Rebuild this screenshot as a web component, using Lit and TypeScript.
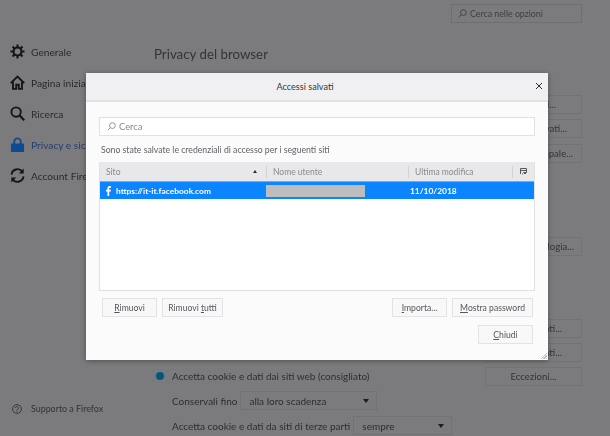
import { LitElement, html, css, svg } from "lit";
import { customElement } from "lit/decorators.js";

const navIcons = {
  gear: svg`<g fill="none" stroke="currentColor"><circle cx="8" cy="8" r="4.2" stroke-width="2.2"/><path stroke-width="2.2" d="M8 0.5v3M8 12.5v3M0.5 8h3M12.5 8h3M2.7 2.7l2.1 2.1M11.2 11.2l2.1 2.1M13.3 2.7l-2.1 2.1M4.8 11.2l-2.1 2.1"/></g>`,
  home: svg`<g fill="none" stroke="currentColor" stroke-width="2"><path d="M0.8 8.6L8 1.6l7.2 7"/><path d="M3.2 7v7.8h3.4v-4.4h2.8v4.4h3.4V7"/></g>`,
  search: svg`<g fill="none" stroke="currentColor" stroke-width="2"><circle cx="6.5" cy="6.5" r="5"/><path stroke-width="2.4" d="M10.2 10.2l5 5"/></g>`,
  lock: svg`<path fill="currentColor" d="M2 7h1.5V5a4.5 4.5 0 0 1 9 0v2H14a1 1 0 0 1 1 1v7a1 1 0 0 1-1 1H2a1 1 0 0 1-1-1V8a1 1 0 0 1 1-1zm3.5 0h5V5a2.5 2.5 0 0 0-5 0z"/>`,
  sync: svg`<g fill="none" stroke="currentColor" stroke-width="2"><path d="M1.6 7A6.5 6.5 0 0 1 13 3.6"/><path d="M14.4 9A6.5 6.5 0 0 1 3 12.4"/></g><path fill="currentColor" d="M14.6 0.6v5.2H9.4zM1.4 15.4v-5.2h5.2z"/>`,
};

const nav = [
  { icon: navIcons.gear, label: "Generale" },
  { icon: navIcons.home, label: "Pagina iniziale" },
  { icon: navIcons.search, label: "Ricerca" },
  { icon: navIcons.lock, label: "Privacy e sicurezza", active: true },
  { icon: navIcons.sync, label: "Account Firefox" },
];

// buttons of the page behind the dialog: gap above, text end from the right edge
const behind = [
  { label: "Eccezioni...", top: 30, pad: 25 },
  { label: "Accessi salvati...", top: 5, pad: 14 },
  { label: "Cambia password principale...", top: 6, pad: 8 },
  { label: "Scegli tecnologia...", top: 74, pad: 7 },
  { label: "Elimina dati...", top: 63, pad: 19 },
  { label: "Gestione dati...", top: 5, pad: 19 },
];

@customElement("app-root")
export class AppRoot extends LitElement {
  static styles = css`
    :host {
      display: block;
      position: relative;
      width: 610px;
      height: 436px;
      overflow: hidden;
      background: #7b7b7d;
      color: #2e2e31;
      font-family: Lato, "Open Sans", sans-serif;
      font-size: 9.5px;
    }
    u {
      text-underline-offset: 1px;
    }
    .page {
      display: flex;
      height: 436px;
      filter: blur(0.35px);
    }
    .sidebar {
      width: 154px;
      flex: none;
      display: flex;
      flex-direction: column;
      padding: 36px 0 22px 10px;
      box-sizing: border-box;
    }
    .nav-item {
      display: flex;
      align-items: center;
      gap: 6px;
      height: 31px;
      font-size: 10.2px;
      white-space: nowrap;
      color: #2b2b2f;
    }
    .nav-item svg {
      width: 15px;
      height: 15px;
      flex: none;
      color: #151517;
    }
    .nav-item.active {
      color: #243f6e;
    }
    .nav-item.active svg {
      color: #0c4a94;
    }
    .support {
      margin-top: auto;
      margin-left: 2px;
      display: flex;
      align-items: center;
      gap: 9px;
      font-size: 8.9px;
      color: #333336;
    }
    .support svg {
      width: 10px;
      height: 10px;
    }
    .main {
      flex: 1;
      display: flex;
      flex-direction: column;
      padding: 4px 28px 0 0;
      min-width: 0;
    }
    .top-search {
      align-self: flex-end;
      width: 131px;
      height: 19px;
      border: 1px solid #6f6f71;
      box-sizing: border-box;
      display: flex;
      align-items: center;
      gap: 3px;
      padding-left: 6px;
      font-size: 8.8px;
      color: #3f3f42;
    }
    .top-search svg,
    .search svg {
      width: 9px;
      height: 9px;
      flex: none;
    }
    h1 {
      margin: 20px 0 0;
      font-size: 13.3px;
      font-weight: 400;
      line-height: 22px;
      color: #343437;
    }
    .behind {
      display: flex;
      flex-direction: column;
      align-items: flex-end;
    }
    .ghost {
      width: 97px;
      height: 19px;
      flex: none;
      box-sizing: border-box;
      border: 1px solid #727274;
      display: flex;
      align-items: center;
      justify-content: flex-end;
      overflow: hidden;
      color: #343437;
      font-size: 9.6px;
      white-space: nowrap;
    }
    .bottom {
      display: flex;
      justify-content: space-between;
      align-items: flex-start;
      margin-top: 5px;
    }
    .accept {
      display: flex;
      align-items: center;
      gap: 8px;
      margin-left: 2px;
      height: 18px;
      font-size: 10px;
    }
    .radio {
      width: 8px;
      height: 8px;
      border-radius: 50%;
      background: #0d5470;
      box-shadow: 0 0 0 2px #6c7f8c;
    }
    .line {
      display: flex;
      align-items: center;
      gap: 3px;
      margin: 6px 0 0 18px;
      font-size: 10px;
      white-space: nowrap;
    }
    .select {
      height: 19px;
      box-sizing: border-box;
      border: 1px solid #727274;
      display: flex;
      align-items: center;
      justify-content: space-between;
      padding: 0 7px 0 8px;
    }
    .select.long {
      width: 137px;
    }
    .select.short {
      width: 99px;
    }
    .select::after {
      content: "";
      border: 3px solid transparent;
      border-top: 4px solid #1c1c1e;
      border-bottom: 0;
    }
    .modal {
      position: absolute;
      left: 86px;
      top: 73px;
      width: 462px;
      height: 287px;
      background: #fbfbfc;
      box-shadow: 0 1px 5px rgba(0, 0, 0, 0.35);
      display: flex;
      flex-direction: column;
      color: #4a4a4f;
      filter: blur(0.3px);
    }
    .modal-head {
      height: 29px;
      flex: none;
      box-sizing: border-box;
      padding-right: 24px;
      background: #f0f0f2;
      border-bottom: 2px solid #e2e2e4;
      display: flex;
      align-items: center;
      justify-content: center;
      position: relative;
      font-size: 9.1px;
      color: #36363a;
    }
    .close {
      position: absolute;
      right: 4px;
      top: 8px;
      width: 10px;
      height: 10px;
      stroke: #2c2c30;
    }
    .modal-body {
      flex: 1;
      padding: 15px 13px 0;
      display: flex;
      flex-direction: column;
      position: relative;
    }
    .search {
      height: 19px;
      flex: none;
      box-sizing: border-box;
      background: #fff;
      border: 1px solid #e2e2e5;
      display: flex;
      align-items: center;
      gap: 3px;
      padding-left: 7px;
      color: #8a8a8f;
      font-size: 9.4px;
    }
    .hint {
      margin: 7px 2px 0;
      height: 14px;
      line-height: 14px;
      font-size: 8.7px;
      color: #626267;
    }
    .table {
      margin-top: 5px;
      height: 129px;
      box-sizing: border-box;
      background: #fff;
      border: 1px solid #e2e2e5;
      border-top: 0;
      flex: none;
      display: flex;
      flex-direction: column;
    }
    .cols {
      display: grid;
      grid-template-columns: 166px 142px 104px 1fr;
      align-items: center;
    }
    .cols.head {
      height: 19px;
      background: #e8e8ea;
      color: #8a8a8e;
      font-size: 8.5px;
    }
    .cols.head > div {
      height: 12px;
      line-height: 12px;
      padding-left: 6px;
      border-left: 1px solid #d2d2d4;
      display: flex;
      align-items: center;
      justify-content: space-between;
    }
    .cols.head > div:first-child {
      border-left: 0;
    }
    .sort {
      margin-right: 9px;
      border: 2.5px solid transparent;
      border-bottom: 3px solid #2a2a2c;
      border-top: 0;
    }
    .picker {
      width: 7px;
      height: 7px;
      margin-left: 1px;
      stroke: #55555a;
    }
    .cols.row {
      height: 18px;
      background: #0a84ff;
      border-top: 1px solid #5cb4ff;
      box-sizing: border-box;
      color: #fff;
      font-size: 8.4px;
      font-weight: 700;
    }
    .site {
      display: flex;
      align-items: center;
      gap: 5px;
      padding-left: 6px;
    }
    .site svg {
      width: 5px;
      height: 10px;
      fill: #fff;
    }
    .redacted {
      height: 12px;
      width: 99px;
      background: #bdbdbf;
    }
    .date {
      padding-left: 2px;
    }
    .actions {
      display: flex;
      justify-content: space-between;
      margin: 7px 2px 0 3px;
    }
    .group {
      display: flex;
      gap: 5px;
    }
    .btn {
      height: 19px;
      box-sizing: border-box;
      background: #f8f8f9;
      border: 1px solid #e3e3e6;
      display: flex;
      align-items: center;
      justify-content: center;
      font-size: 8.6px;
      color: #55555a;
      white-space: nowrap;
    }
    .w55 {
      width: 55px;
    }
    .w61 {
      width: 61px;
    }
    .w81 {
      width: 81px;
    }
    .footer {
      display: flex;
      justify-content: flex-end;
      margin: 8px 2px 0 0;
    }
    .grip {
      position: absolute;
      right: 1px;
      bottom: 1px;
      width: 7px;
      height: 7px;
      background: repeating-linear-gradient(135deg, transparent 0 1px, #bbbbbe 1px 2px);
      clip-path: polygon(100% 0, 100% 100%, 0 100%);
    }
  `;

  private lens() {
    return html`<svg viewBox="0 0 10 10" fill="none" stroke="currentColor">
      <circle cx="6" cy="4" r="3.2" /><path d="M3.6 6.4L1 9" />
    </svg>`;
  }

  private background() {
    return html`<div class="page">
      <nav class="sidebar">
        ${nav.map(
          (n) => html`<div class="nav-item ${n.active ? "active" : ""}">
            <svg viewBox="0 0 16 16">${n.icon}</svg>${n.label}
          </div>`,
        )}
        <div class="support">
          <svg viewBox="0 0 10 10" fill="none" stroke="currentColor" stroke-width="0.9">
            <circle cx="5" cy="5" r="4.4" />
            <path d="M3.5 4a1.5 1.5 0 1 1 2.2 1.3C5.1 5.6 5 6 5 6.5M5 7.2v0.9" />
          </svg>
          Supporto a Firefox
        </div>
      </nav>
      <div class="main">
        <div class="top-search">${this.lens()}Cerca nelle opzioni</div>
        <h1>Privacy del browser</h1>
        <div class="behind">
          ${behind.map(
            (b) => html`<div class="ghost" style="margin-top:${b.top}px;padding-right:${b.pad}px">
              ${b.label}
            </div>`,
          )}
        </div>
        <div class="bottom">
          <div>
            <div class="accept">
              <span class="radio"></span>Accetta cookie e dati dai siti web (consigliato)
            </div>
            <div class="line">
              Conservali fino
              <div class="select long">alla loro scadenza</div>
            </div>
            <div class="line">
              Accetta cookie e dati da siti di terze parti
              <div class="select short">sempre</div>
            </div>
          </div>
          <div class="ghost" style="justify-content:center">Eccezioni...</div>
        </div>
      </div>
    </div>`;
  }

  render() {
    return html`
      ${this.background()}
      <section class="modal">
        <header class="modal-head">
          Accessi salvati
          <svg class="close" viewBox="0 0 10 10"><path d="M2 2l6 6M8 2l-6 6" /></svg>
        </header>
        <div class="modal-body">
          <div class="search">${this.lens()}Cerca</div>
          <div class="hint">Sono state salvate le credenziali di accesso per i seguenti siti</div>
          <div class="table">
            <div class="cols head">
              <div>Sito<span class="sort"></span></div>
              <div>Nome utente</div>
              <div>Ultima modifica</div>
              <div>
                <svg class="picker" viewBox="0 0 7 7" fill="none">
                  <path d="M0.5 6V0.5h6V4M0.5 2.5h6M2 6h1M3.5 4.5l1.5 1.5 1.5-1.5z" />
                </svg>
              </div>
            </div>
            <div class="cols row">
              <div class="site">
                <svg viewBox="0 0 5 10">
                  <path d="M1.4 10V5.5H0V3.8h1.4V2.5C1.4 1 2.3 0 3.7 0H5v1.7H4c-.6 0-.8.3-.8.9v1.2H5l-.3 1.7H3.2V10z" />
                </svg>
                https://it-it.facebook.com
              </div>
              <div class="redacted"></div>
              <div class="date">11/10/2018</div>
              <div></div>
            </div>
          </div>
          <div class="actions">
            <div class="group">
              <div class="btn w55"><span><u>R</u>imuovi</span></div>
              <div class="btn w61"><span>Rimuovi <u>t</u>utti</span></div>
            </div>
            <div class="group">
              <div class="btn w55"><span><u>I</u>mporta...</span></div>
              <div class="btn w81"><span><u>M</u>ostra password</span></div>
            </div>
          </div>
          <div class="footer">
            <div class="btn w55"><span><u>C</u>hiudi</span></div>
          </div>
          <div class="grip"></div>
        </div>
      </section>
    `;
  }
}

declare global {
  interface HTMLElementTagNameMap {
    "app-root": AppRoot;
  }
}
